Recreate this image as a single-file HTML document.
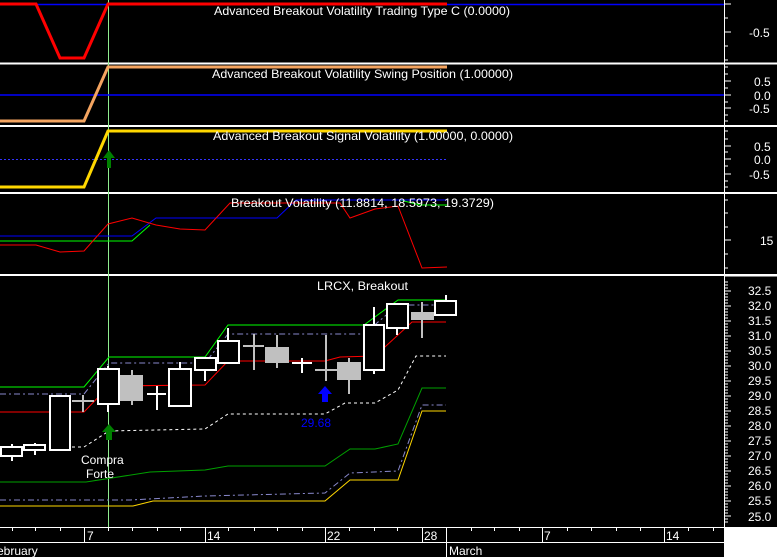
<!DOCTYPE html>
<html><head><style>
html,body{margin:0;padding:0;background:#000;}
svg{display:block;}
text{font-family:"Liberation Sans",sans-serif;font-size:12px;fill:#fff;}
</style></head><body>
<svg width="777" height="557" viewBox="0 0 777 557" xmlns="http://www.w3.org/2000/svg">
<rect width="777" height="557" fill="#000"/>
<!-- panel dividers -->
<g stroke="#fff" stroke-width="2">
<line x1="0" y1="63.5" x2="777" y2="63.5"/>
<line x1="0" y1="126" x2="777" y2="126"/>
<line x1="0" y1="193" x2="777" y2="193"/>
<line x1="0" y1="275" x2="777" y2="275"/>
</g>
<!-- green vertical -->
<line x1="108.5" y1="0" x2="108.5" y2="527" stroke="#90ee90" stroke-width="1"/>

<!-- panel 1 -->
<line x1="0" y1="4.5" x2="724" y2="4.5" stroke="#00f" stroke-width="1.5"/>
<polyline points="0,4 36,4 60,58 84,58 108,4 447,4" fill="none" stroke="#f00" stroke-width="3"/>
<text x="214" y="15" textLength="296" lengthAdjust="spacingAndGlyphs">Advanced Breakout Volatility Trading Type C (0.0000)</text>

<!-- panel 2 -->
<line x1="0" y1="95" x2="724" y2="95" stroke="#00f" stroke-width="1.5"/>
<polyline points="0,121 84,121 108,67 447,67" fill="none" stroke="#f4a460" stroke-width="3"/>
<text x="212" y="78" textLength="301" lengthAdjust="spacingAndGlyphs">Advanced Breakout Volatility Swing Position (1.00000)</text>

<!-- panel 3 -->
<line x1="0" y1="159.5" x2="447" y2="159.5" stroke="#33f" stroke-width="1" stroke-dasharray="2,2"/>
<polyline points="0,187 84,187 108,131 447,131" fill="none" stroke="#ffd700" stroke-width="3"/>
<polygon points="109,150 103,158 107,158 107,168 111,168 111,158 115,158" fill="#008000"/>
<text x="213" y="140" textLength="300" lengthAdjust="spacingAndGlyphs">Advanced Breakout Signal Volatility (1.00000, 0.0000)</text>

<!-- panel 4 -->
<polyline points="0,241 132,241 150,225" fill="none" stroke="#0f0" stroke-width="1"/>
<polyline points="400,200 420,205 447,205" fill="none" stroke="#0f0" stroke-width="1"/>
<polyline points="0,236 132,236 156,218 277,218 296,200 447,200" fill="none" stroke="#00f" stroke-width="1"/>
<polyline points="0,245 36,245 60,252 84,251 108,224 132,218 156,225 180,229 205,230 230,203 340,203 350,218 375,209 398,206 422,268 447,267" fill="none" stroke="#f00" stroke-width="1"/>
<text x="231" y="207" textLength="263" lengthAdjust="spacingAndGlyphs">Breakout Volatility (11.8814, 18.5973, 19.3729)</text>

<!-- price lines -->
<polyline points="0,506 133,506 153,501 325,501 350,480 398,480 422,411 446,411" fill="none" stroke="#ffd700" stroke-width="1"/>
<polyline points="0,500 130,500 205,496 325,493 350,473 398,471 422,405 446,405" fill="none" stroke="#8888cc" stroke-width="1" stroke-dasharray="6,3,2,3"/>
<polyline points="0,482 86,482 150,472 205,470 228,466 325,466 350,449 375,449 398,444 422,388 446,388" fill="none" stroke="#00a000" stroke-width="1"/>
<polyline points="60,447 84,447 109,431 205,429 228,414 325,414 345,403 375,403 398,390 416,356 446,356" fill="none" stroke="#fff" stroke-width="1" stroke-dasharray="3,3"/>
<polyline points="0,387 84,387 109,357 205,357 228,325 364,325 398,300 446,300" fill="none" stroke="#0f0" stroke-width="1"/>
<polyline points="0,394 84,394 109,363 205,363 228,334 364,334 398,305 446,305" fill="none" stroke="#8888cc" stroke-width="1" stroke-dasharray="6,3,2,3"/>
<polyline points="0,412 84,412 109,386 205,385 228,361 325,361 340,357 375,356 398,335 412,322 446,322" fill="none" stroke="#f00" stroke-width="1"/>

<!-- candles -->
<g stroke-width="2">
<g stroke="#fff" fill="#000">
<line x1="12" y1="444" x2="12" y2="461"/><rect x="1" y="447" width="21" height="9"/>
<line x1="35" y1="443" x2="35" y2="455"/><rect x="24" y="445" width="21" height="5"/>
<rect x="50" y="396" width="20" height="54"/>
<line x1="108" y1="366" x2="108" y2="412"/><rect x="98" y="369" width="21" height="35"/>
<line x1="157" y1="386" x2="157" y2="410"/><line x1="147" y1="394" x2="166" y2="394"/>
<line x1="180" y1="362" x2="180" y2="369"/><rect x="169" y="369" width="22" height="37"/>
<line x1="205" y1="370" x2="205" y2="381"/><rect x="195" y="358" width="21" height="12"/>
<line x1="228" y1="328" x2="228" y2="341"/><rect x="218" y="341" width="21" height="22"/>
<line x1="302" y1="358" x2="302" y2="373"/><line x1="292" y1="363" x2="312" y2="363"/>
<line x1="374" y1="307" x2="374" y2="374"/><rect x="364" y="325" width="20" height="45"/>
<line x1="397" y1="328" x2="397" y2="335"/><rect x="387" y="304" width="21" height="24"/>
<line x1="446" y1="295" x2="446" y2="301"/><rect x="435" y="301" width="21" height="14"/>
</g>
<g stroke="#c0c0c0" fill="#c0c0c0">
<line x1="83" y1="395" x2="83" y2="412"/><line x1="72" y1="401" x2="94" y2="401"/>
<line x1="132" y1="370" x2="132" y2="405"/><rect x="121" y="376" width="21" height="24"/>
<line x1="254" y1="334" x2="254" y2="370"/><line x1="243" y1="346" x2="264" y2="346"/>
<line x1="277" y1="335" x2="277" y2="368"/><rect x="266" y="348" width="22" height="14"/>
<line x1="326" y1="335" x2="326" y2="381"/><line x1="315" y1="370" x2="337" y2="370"/>
<line x1="349" y1="358" x2="349" y2="394"/><rect x="338" y="363" width="22" height="16"/>
<line x1="422" y1="302" x2="422" y2="338"/><rect x="412" y="313" width="21" height="6"/>
</g>
</g>
<!-- arrows -->
<polygon points="109,424 102,432 106,432 106,440 112,440 112,432 116,432" fill="#008000"/>
<polygon points="325,386 318,394 322,394 322,402 328,402 328,394 332,394" fill="#00f"/>
<text x="301" y="427" style="fill:#00f" textLength="30" lengthAdjust="spacingAndGlyphs">29.68</text>
<text x="81" y="464">Compra</text>
<text x="86" y="478">Forte</text>
<text x="317" y="290" textLength="91" lengthAdjust="spacingAndGlyphs">LRCX, Breakout</text>

<!-- right axis -->
<line x1="724.5" y1="0" x2="724.5" y2="527" stroke="#fff" stroke-width="1"/>
<g stroke="#fff" stroke-width="1">
<line x1="724" y1="276" x2="777" y2="276"/>
</g>
<g stroke="#fff" stroke-width="1" id="ticks">
<path d="M725 4h6M725 18h3M725 32h6M725 46h3M725 60h3
M725 67h3M725 74h3M725 81h6M725 88h3M725 95h6M725 102h3M725 108h6M725 115h3M725 121h3
M725 131h3M725 139h3M725 146h6M725 152h3M725 159h6M725 166h3M725 174h6M725 181h3M725 187h3
M725 200h3M725 213h3M725 227h3M725 240h6M725 254h3M725 268h3"/>
<path d="M725 291h6M725 306h6M725 321h6M725 336h6M725 351h6M725 366h6M725 381h6M725 396h6M725 411h6M725 426h6M725 441h6M725 456h6M725 471h6M725 486h6M725 501h6M725 516h6"/>
<path d="M725 282h3M725 285h3M725 288h3M725 294h3M725 297h3M725 300h3M725 303h3M725 309h3M725 312h3M725 315h3M725 318h3M725 324h3M725 327h3M725 330h3M725 333h3M725 339h3M725 342h3M725 345h3M725 348h3M725 354h3M725 357h3M725 360h3M725 363h3M725 369h3M725 372h3M725 375h3M725 378h3M725 384h3M725 387h3M725 390h3M725 393h3M725 399h3M725 402h3M725 405h3M725 408h3M725 414h3M725 417h3M725 420h3M725 423h3M725 429h3M725 432h3M725 435h3M725 438h3M725 444h3M725 447h3M725 450h3M725 453h3M725 459h3M725 462h3M725 465h3M725 468h3M725 474h3M725 477h3M725 480h3M725 483h3M725 489h3M725 492h3M725 495h3M725 498h3M725 504h3M725 507h3M725 510h3M725 513h3M725 519h3M725 522h3"/>
</g>
<g style="font-size:12px">
<text x="749" y="37">-0.5</text>
<text x="754" y="86">0.5</text><text x="754" y="100">0.0</text><text x="749" y="113">-0.5</text>
<text x="754" y="151">0.5</text><text x="754" y="164">0.0</text><text x="749" y="179">-0.5</text>
<text x="760" y="245">15</text>
<text x="748" y="295">32.5</text><text x="748" y="310">32.0</text><text x="748" y="325">31.5</text><text x="748" y="340">31.0</text><text x="748" y="355">30.5</text><text x="748" y="370">30.0</text><text x="748" y="385">29.5</text><text x="748" y="400">29.0</text><text x="748" y="415">28.5</text><text x="748" y="430">28.0</text><text x="748" y="445">27.5</text><text x="748" y="460">27.0</text><text x="748" y="475">26.5</text><text x="748" y="490">26.0</text><text x="748" y="505">25.5</text><text x="748" y="521">25.0</text>
</g>
<!-- bottom axis -->
<rect x="724" y="527" width="53" height="30" fill="#fff"/>
<g stroke="#fff" stroke-width="1">
<line x1="0" y1="527.5" x2="724" y2="527.5"/>
<line x1="0" y1="542.5" x2="724" y2="542.5"/>
<line x1="446.5" y1="542" x2="446.5" y2="557"/>
<path d="M84.5 527v15M205.5 527v15M325.5 527v15M422.5 527v15M542.5 527v15M664.5 527v15"/>
<path d="M12.5 527v4M35.5 527v4M60.5 527v4M108.5 527v4M132.5 527v4M157.5 527v4M180.5 527v4M228.5 527v4M254.5 527v4M277.5 527v4M302.5 527v4M349.5 527v4M374.5 527v4M397.5 527v4M446.5 527v15M471.5 527v4M494.5 527v4M519.5 527v4M567.5 527v4M591.5 527v4M616.5 527v4M640.5 527v4M688.5 527v4M713.5 527v4"/>
</g>
<text x="87" y="540">7</text><text x="207" y="540">14</text><text x="327" y="540">22</text><text x="424" y="540">28</text><text x="544" y="540">7</text><text x="666" y="540">14</text>
<text x="-3" y="555">ebruary</text><text x="449" y="555">March</text>
</svg>
</body></html>
